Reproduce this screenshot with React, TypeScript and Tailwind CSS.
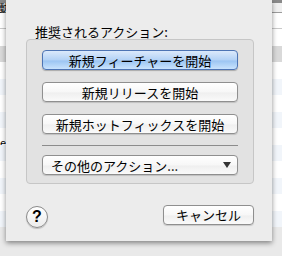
import React from "react";

const font = { fontFamily: '"Noto Sans CJK JP", "Liberation Sans", sans-serif' };

const rows = [
  "bg-white",
  "bg-[#d9d9d9]",
  "bg-white",
  "bg-[#f1f5fa]",
  "bg-white",
  "bg-[#f1f5fa]",
  "bg-white",
  "bg-[#f1f5fa]",
  "bg-white",
  "bg-[#f1f5fa]",
  "bg-white",
  "bg-[#f1f5fa]",
];

const PushButton = ({ label, primary }: { label: string; primary?: boolean }) => (
  <button
    className={
      primary
        ? "h-5 w-full rounded-[4px] border border-[#4d74b4] bg-[linear-gradient(#dbe9fb_0%,#b3d2f6_50%,#9cc5f2_55%,#c9e3fd_100%)] text-[13px] leading-none text-black shadow-[0_1px_1px_rgba(0,0,0,0.25)]"
        : "h-5 w-full rounded-[4px] border border-[#8f8f8f] bg-[linear-gradient(#ffffff_0%,#f7f7f7_50%,#efefef_55%,#fafafa_100%)] text-[13px] leading-none text-black shadow-[0_1px_1px_rgba(0,0,0,0.15)]"
    }
  >
    {label}
  </button>
);

export default function App() {
  return (
    <div className="relative h-[256px] w-[282px] overflow-hidden bg-[#e9e9e9]" style={font}>
      {/* window behind the sheet */}
      <div className="flex flex-col">
        <div className="h-[3px] bg-[#8a8a8a]" />
        <div className="flex h-[10px] items-center border-b border-[#9c9c9c] bg-[#f0f0f0] text-[10px] leading-none">
          <span className="-ml-px">動</span>
        </div>
        <div className="h-[16px] border-b border-[#c9c9c9] bg-white" />
        {rows.map((c, i) => (
          <div key={i} className={`h-[16.5px] ${c}`}>
            {i === 6 && <span className="text-[11px] leading-none">e</span>}
          </div>
        ))}
      </div>

      {/* sheet */}
      <div className="absolute left-[6px] top-0 flex h-[241px] w-[266px] flex-col bg-[#ececec] pb-[13px] pl-5 pr-[18px] pt-[24px] shadow-[0_2px_5px_rgba(0,0,0,0.45)]">
        <div className="ml-[9px] h-[15px] text-[13px] leading-[15px] text-black">推奨されるアクション:</div>
        <div className="flex h-[145px] w-[228px] flex-col rounded-[4px] border border-[#c6c6c6] bg-[#e2e2e2] px-[15px] pt-[10px]">
          <div className="flex flex-col gap-3">
            <PushButton label="新規フィーチャーを開始" primary />
            <PushButton label="新規リリースを開始" />
            <PushButton label="新規ホットフィックスを開始" />
          </div>
          <div className="mb-[9px] mt-[11px] h-px bg-[#8c8c8c]" />
          <button className="flex h-5 w-full items-center justify-between rounded-[4px] border border-[#8f8f8f] bg-[linear-gradient(#ffffff_0%,#f7f7f7_50%,#efefef_55%,#fafafa_100%)] pl-[8px] pr-[6px] text-[13px] leading-none text-black shadow-[0_1px_1px_rgba(0,0,0,0.15)]">
            <span>その他のアクション...</span>
            <svg width="8" height="6" viewBox="0 0 8 6">
              <path d="M0 0 H8 L4 6 Z" fill="#333" />
            </svg>
          </button>
        </div>
        <div className="mt-auto flex items-end justify-between">
          <button className="flex h-[22px] w-[22px] items-center justify-center rounded-full border border-[#8a8a8a] bg-[linear-gradient(#ffffff,#ececec)] text-[16px] font-bold leading-none text-black shadow-[0_1px_1px_rgba(0,0,0,0.2)]" style={{ fontFamily: '"Liberation Sans", sans-serif' }}>
            ?
          </button>
          <div className="mb-[3px] w-[91px]">
            <PushButton label="キャンセル" />
          </div>
        </div>
      </div>
    </div>
  );
}
